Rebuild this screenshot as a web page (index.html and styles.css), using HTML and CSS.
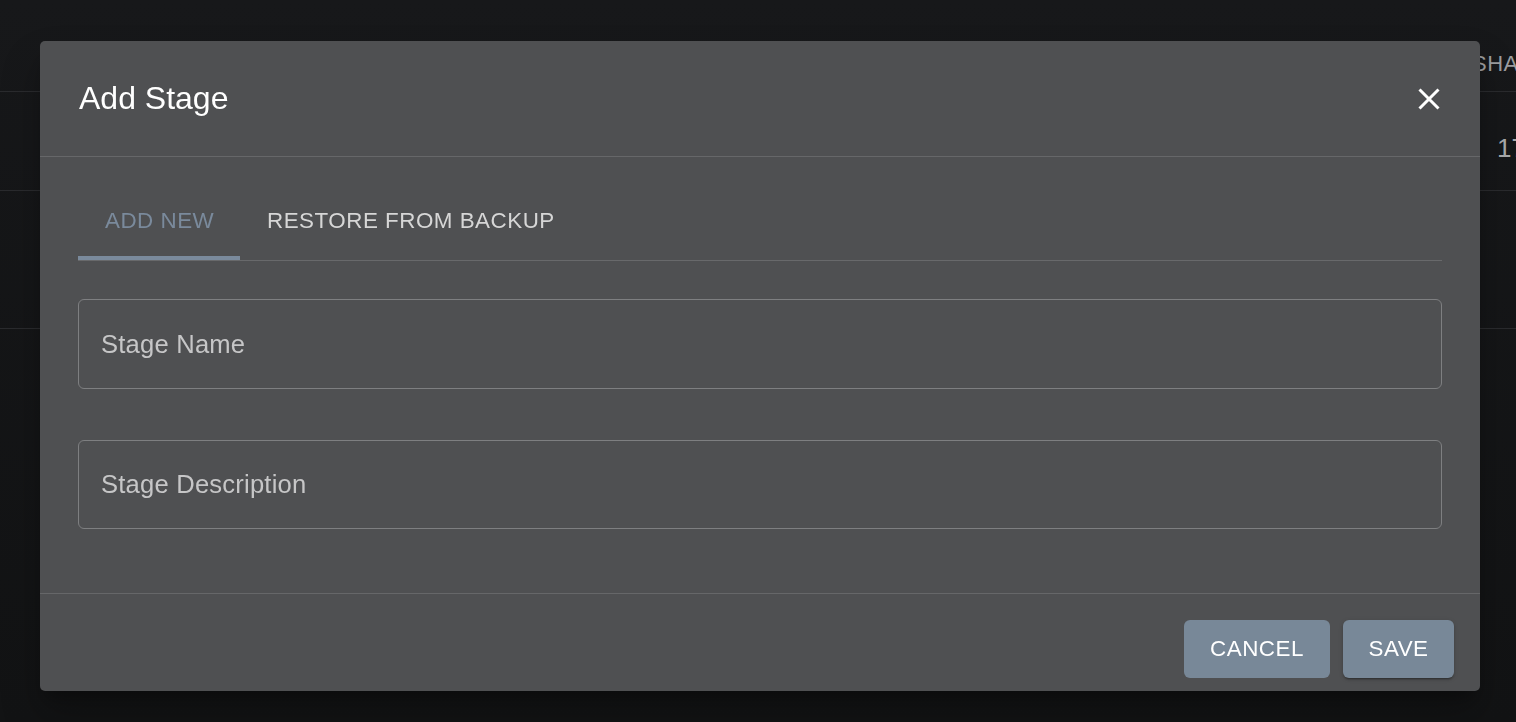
FILE: index.html
```html
<!DOCTYPE html>
<html lang="en">
<head>
<meta charset="utf-8">
<title>Add Stage</title>
<link rel="stylesheet" href="styles.css">
</head>
<body>
  <div class="page">
    <div class="table">
      <div class="trow thead">
        <div class="cell head-cell">SHARED</div>
      </div>
      <div class="trow tr1">
        <div class="cell body-cell">17</div>
      </div>
      <div class="trow tr2"></div>
    </div>
  </div>

  <div class="overlay">
    <div class="dialog" role="dialog" aria-labelledby="dlg-title">
      <div class="dialog-header">
        <h2 id="dlg-title" class="dialog-title">Add Stage</h2>
        <button class="close-btn" aria-label="Close">
          <svg width="22" height="22" viewBox="0 0 22 22">
            <path d="M1.5 1.5 L20.5 20.5 M20.5 1.5 L1.5 20.5" stroke="#ffffff" stroke-width="3" fill="none"/>
          </svg>
        </button>
      </div>
      <div class="dialog-body">
        <div class="tabs">
          <div class="tab tab-active">ADD NEW</div>
          <div class="tab">RESTORE FROM BACKUP</div>
          <div class="indicator"></div>
        </div>
        <div class="field field-first">
          <span class="placeholder">Stage Name</span>
        </div>
        <div class="field field-second">
          <span class="placeholder">Stage Description</span>
        </div>
      </div>
      <div class="dialog-footer">
        <button class="btn btn-cancel">CANCEL</button>
        <button class="btn btn-save">SAVE</button>
      </div>
    </div>
  </div>
</body>
</html>
```

FILE: styles.css
```css
* { box-sizing: border-box; }

html, body {
  margin: 0;
  padding: 0;
  height: 100%;
}

body {
  background: #161719;
  font-family: "Liberation Sans", Arial, sans-serif;
  overflow: hidden;
}

.page {
  width: 1516px;
  height: 722px;
  background: linear-gradient(#17181a, #121314);
}

.table {
  display: flex;
  flex-direction: column;
}

.trow {
  display: flex;
  justify-content: flex-end;
  border-bottom: 1px solid #2a2b2e;
}

.thead {
  height: 92px;
  align-items: center;
  padding-top: 36px;
}

.tr1 {
  height: 99px;
  align-items: center;
  padding-top: 14px;
}

.tr2 {
  height: 138px;
}

.cell {
  overflow: hidden;
  white-space: nowrap;
}

.head-cell {
  width: 44px;
  color: #9c9d9f;
  font-size: 22px;
  letter-spacing: 0.5px;
}

.body-cell {
  width: 19px;
  color: #a9aaac;
  font-size: 26px;
}

.overlay {
  position: fixed;
  inset: 0;
  padding: 41px 0 0 40px;
  display: flex;
  align-items: flex-start;
}

.dialog {
  width: 1440px;
  height: 650px;
  background: #4f5052;
  border-radius: 5px;
  display: flex;
  flex-direction: column;
  box-shadow: 0 11px 15px -7px rgba(0,0,0,0.3), 0 24px 38px 3px rgba(0,0,0,0.2);
}

.dialog-header {
  height: 116px;
  flex: none;
  display: flex;
  align-items: center;
  justify-content: space-between;
  padding: 0 40px 0 39px;
  border-bottom: 1px solid #666769;
}

.dialog-title {
  margin: 0;
  font-size: 32px;
  font-weight: 400;
  color: #ffffff;
  line-height: 1.6;
}

.close-btn {
  background: none;
  border: none;
  padding: 0;
  width: 22px;
  height: 22px;
  display: flex;
  cursor: pointer;
}

.dialog-body {
  flex: 1;
  padding: 25px 38px 0 38px;
  display: flex;
  flex-direction: column;
}

.tabs {
  position: relative;
  display: flex;
  height: 79px;
  border-bottom: 1px solid #68696b;
  flex: none;
}

.tab {
  height: 78px;
  display: flex;
  align-items: center;
  padding: 0 26px 0 27px;
  font-size: 22.4px;
  letter-spacing: 0.5px;
  color: #d6d6d6;
  white-space: nowrap;
}

.tab-active {
  color: #7a8a9c;
  width: 162px;
  padding-right: 0;
}

.indicator {
  position: absolute;
  left: 0;
  bottom: 0;
  width: 162px;
  height: 4px;
  background: #7a8a9c;
}

.field {
  height: 90px;
  border: 1px solid #7e7f81;
  border-radius: 6px;
  display: flex;
  align-items: center;
  padding-left: 22px;
  flex: none;
}

.field-first {
  margin-top: 38px;
}

.field-second {
  margin-top: 51px;
  height: 89px;
}

.placeholder {
  font-size: 25.6px;
  letter-spacing: 0.2px;
  color: #c6c6c7;
}

.dialog-footer {
  flex: none;
  border-top: 1px solid #666769;
  padding: 26px 26px 13px 0;
  display: flex;
  justify-content: flex-end;
  gap: 13px;
}

.btn {
  height: 58px;
  border: none;
  border-radius: 6px;
  background: #788898;
  color: #ffffff;
  font-family: "Liberation Sans", Arial, sans-serif;
  font-size: 22.4px;
  letter-spacing: 0.5px;
  padding: 0;
  cursor: pointer;
}

.btn-cancel {
  width: 146px;
}

.btn-save {
  width: 111px;
  box-shadow: 0 3px 1px -2px rgba(0,0,0,0.2), 0 2px 2px 0 rgba(0,0,0,0.14), 0 1px 5px 0 rgba(0,0,0,0.12);
}
```
